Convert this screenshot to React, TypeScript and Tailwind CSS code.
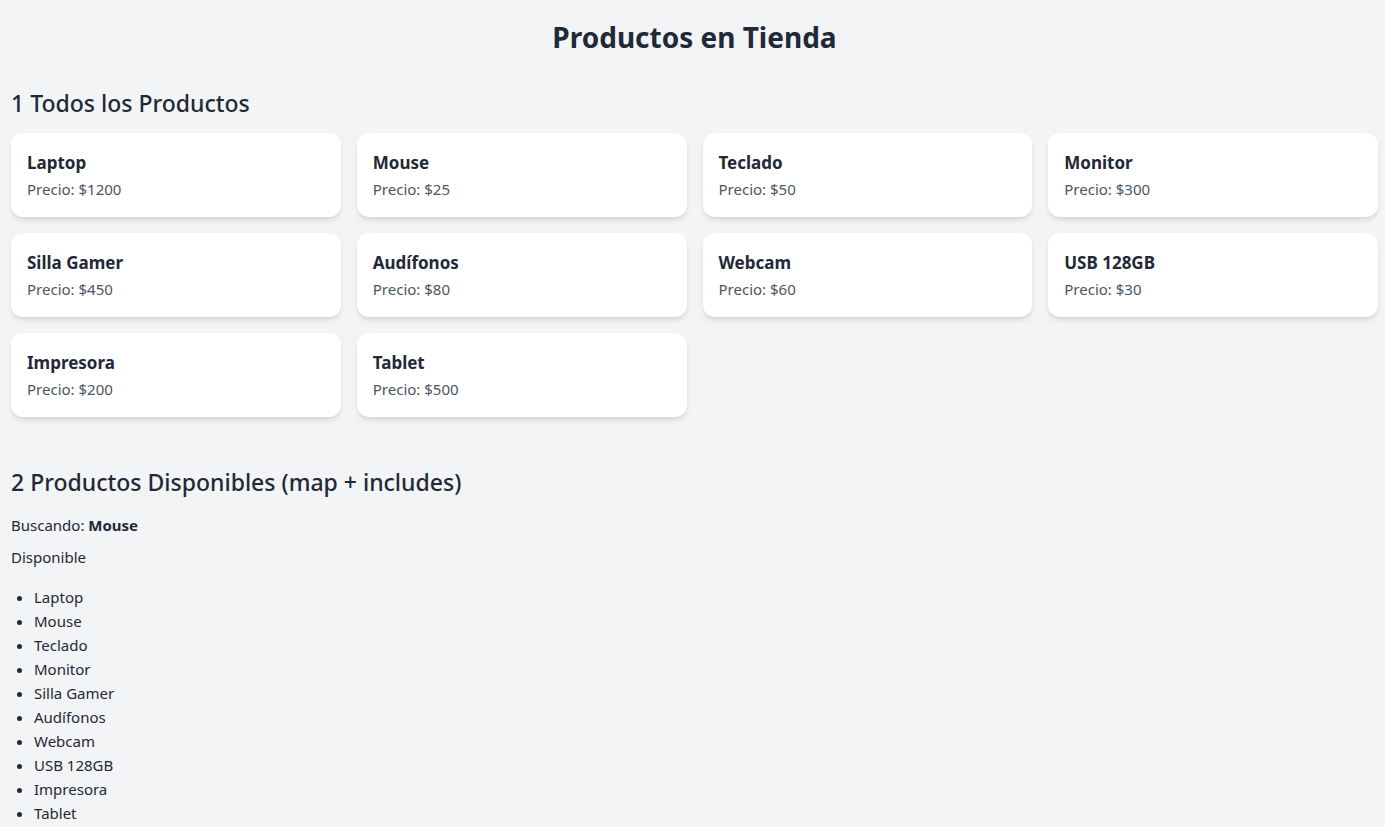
const productos = [
  { nombre: "Laptop", precio: 1200 },
  { nombre: "Mouse", precio: 25 },
  { nombre: "Teclado", precio: 50 },
  { nombre: "Monitor", precio: 300 },
  { nombre: "Silla Gamer", precio: 450 },
  { nombre: "Audífonos", precio: 80 },
  { nombre: "Webcam", precio: 60 },
  { nombre: "USB 128GB", precio: 30 },
  { nombre: "Impresora", precio: 200 },
  { nombre: "Tablet", precio: 500 },
];

const busqueda = "Mouse";

export default function App() {
  const disponible = productos.map((p) => p.nombre).includes(busqueda);

  return (
    <div className="min-h-screen bg-[#f3f4f6] pl-[11px] pr-[7px] pt-[19px] pb-6 text-[#1f2937] font-['Noto_Sans',sans-serif]">
      {/* Titulo */}
      <h1 className="text-[28px] font-bold text-center leading-9">Productos en Tienda</h1>

      {/* Seccion 1 */}
      <h2 className="mt-8 text-[23px] font-medium leading-8">1 Todos los Productos</h2>
      <div className="mt-[14px] grid grid-cols-4 gap-4">
        {productos.map((p) => (
          <div key={p.nombre} className="bg-white rounded-xl shadow-md p-4 h-[84px]">
            <h3 className="text-[17px] font-bold leading-[30px] -mt-px">{p.nombre}</h3>
            <p className="text-[15px] text-[#4b5563] leading-6 -mt-px">Precio: ${p.precio}</p>
          </div>
        ))}
      </div>

      {/* Seccion 2 */}
      <h2 className="mt-[49px] text-[23px] font-medium leading-8">2 Productos Disponibles (map + includes)</h2>
      <p className="mt-[17px] text-[15px] leading-5">
        Buscando: <strong className="font-bold">{busqueda}</strong>
      </p>
      <p className="mt-3 text-[15px] leading-5">{disponible ? "Disponible" : "No disponible"}</p>
      <ul className="mt-[18px] list-disc pl-[23px] text-[15px]">
        {productos.map((p) => (
          <li key={p.nombre} className="leading-6">
            {p.nombre}
          </li>
        ))}
      </ul>
    </div>
  );
}
